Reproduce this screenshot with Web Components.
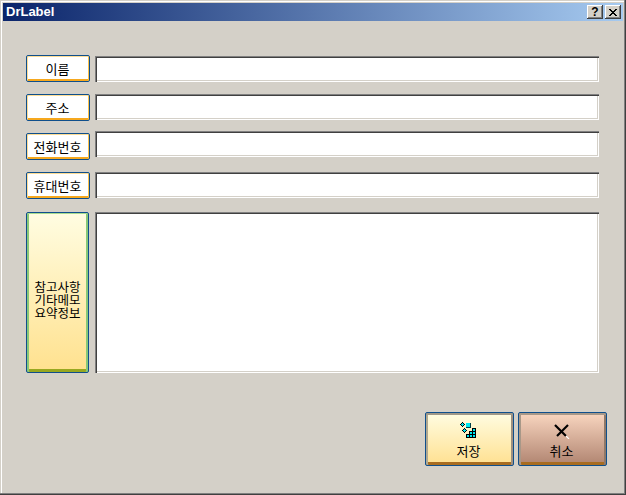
<!DOCTYPE html>
<html lang="ko">
<head>
<meta charset="utf-8">
<title>DrLabel</title>
<style>
  html, body { margin: 0; padding: 0; background: #d4d0c8; }
  body { font: 13px "Noto Sans CJK KR", "Liberation Sans", sans-serif; color: #000; }
  .r2 { margin-top: 12px; }
  .r3 { margin-top: 10px; }
  .r4 { margin-top: 12px; }
  .r5 { margin-top: 13px; }
  .r3 dr-label { height: 27px; align-self: end; }
  svg { display: block; }
</style>
</head>
<body>
<dr-window caption="DrLabel">
  <dr-form>
    <dr-row height="27"><dr-label slot="label">이름</dr-label></dr-row>
    <dr-row class="r2" height="27" box="top"><dr-label slot="label">주소</dr-label></dr-row>
    <dr-row class="r3" height="29" box="top"><dr-label slot="label">전화번호</dr-label></dr-row>
    <dr-row class="r4" height="27" box="top"><dr-label slot="label">휴대번호</dr-label></dr-row>
    <dr-row class="r5" height="161" multiline><dr-label slot="label" big>참고사항<br>기타메모<br>요약정보</dr-label></dr-row>
  </dr-form>
  <dr-actions>
    <dr-action kind="save">
      <svg slot="icon" width="17" height="17" viewBox="0 0 17 17" shape-rendering="crispEdges">
        <g id="dia" transform="translate(0 0)">
          <path fill="#000" d="M2 0h1v1h-1zM1 1h1v1h-1zM3 1h1v1h-1zM0 2h1v1h-1zM4 2h1v1h-1zM1 3h1v1h-1zM3 3h1v1h-1zM2 4h1v1h-1z"/>
          <path fill="#00e8f0" d="M2 1h1v1h1v1h-1v1h-1v-1h-1v-1h1z"/>
        </g>
        <use href="#dia" x="2" y="6"/>
        <path fill="#004048" d="M6 1h5v5H6z"/>
        <path fill="#00e8f0" d="M6 1h4v4H6z"/>
        <path fill="#000" d="M6 12h3V9h3V6h4v10H6z"/>
        <path fill="#00e8f0" d="M7 13h2v2H7zM10 13h2v2h-2zM13 13h2v2h-2zM10 10h2v2h-2zM13 10h2v2h-2zM13 7h2v2h-2z"/>
      </svg>
      저장
    </dr-action>
    <dr-action kind="cancel">
      <svg slot="icon" width="17" height="17" viewBox="0 0 17 17">
        <path stroke="#000" stroke-width="2.2" d="M2 3L13 14"/>
        <path stroke="#000" stroke-width="2.2" d="M15 3L4 14"/>
        <path stroke="#fff" stroke-width="1.1" d="M13 14L16 17"/>
      </svg>
      취소
    </dr-action>
  </dr-actions>
</dr-window>

<script>
class DrCaptionButton extends HTMLElement {
  connectedCallback() {
    this.attachShadow({ mode: 'open' }).innerHTML = `
      <style>
        :host {
          display: flex;
          align-items: center;
          justify-content: center;
          box-sizing: border-box;
          width: 16px;
          height: 14px;
          background: #d4d0c8;
          box-shadow: inset -1px -1px 0 #404040, inset 1px 1px 0 #fff, inset -2px -2px 0 #808080;
          font: bold 12px/14px "Liberation Sans", sans-serif;
          color: #000;
        }
      </style>
      <slot></slot>
    `;
  }
}

class DrWindow extends HTMLElement {
  connectedCallback() {
    const caption = this.getAttribute('caption') || '';
    this.attachShadow({ mode: 'open' }).innerHTML = `
      <style>
        :host {
          display: block;
          box-sizing: border-box;
          width: 626px;
          height: 495px;
          padding: 3px;
          background: #d4d0c8;
          box-shadow: inset -1px -1px 0 #404040, inset -2px -2px 0 #808080, inset 1px 1px 0 #d4d0c8, inset 2px 2px 0 #fff;
        }
        .title {
          display: flex;
          align-items: center;
          height: 18px;
          padding: 0 2px 0 3px;
          background: linear-gradient(90deg, #0a246a, #a6caf0);
          color: #fff;
          font: bold 13px/18px "Liberation Sans", sans-serif;
        }
        .title span { flex: 1; }
        .btns { display: flex; gap: 2px; }
        svg { display: block; }
      </style>
      <div class="title">
        <span>${caption}</span>
        <div class="btns">
          <dr-caption-button>?</dr-caption-button>
          <dr-caption-button>
            <svg width="8" height="7" viewBox="0 0 8 7" shape-rendering="crispEdges">
              <path d="M0 0h2v1h1v1h2V1h1V0h2v1H7v1H6v1H5v1h1v1h1v1h1v1H6V6H5V5H3v1H2v1H0V6h1V5h1V4h1V3H2V2H1V1H0z"/>
            </svg>
          </dr-caption-button>
        </div>
      </div>
      <slot></slot>
    `;
  }
}

class DrForm extends HTMLElement {
  connectedCallback() {
    this.attachShadow({ mode: 'open' }).innerHTML = `
      <style>
        :host {
          display: flex;
          flex-direction: column;
          padding: 34px 24px 0 23px;
        }
      </style>
      <slot></slot>
    `;
  }
}

class DrRow extends HTMLElement {
  connectedCallback() {
    const multi = this.hasAttribute('multiline');
    const field = multi ? '<textarea></textarea>' : '<input type="text">';
    const h = this.getAttribute('height');
    const top = this.getAttribute('box') === 'top';
    this.attachShadow({ mode: 'open' }).innerHTML = `
      <style>
        :host {
          display: grid;
          grid-template-columns: 69px 1fr;
          height: ${h}px;
        }
        .box {
          box-sizing: border-box;
          height: ${multi ? h : 26}px;
          align-self: ${multi || top ? 'start' : 'end'};
          background: #fff;
          box-shadow: inset 1px 1px 0 #808080, inset 2px 2px 0 #404040, inset -1px -1px 0 #fff, inset -2px -2px 0 #d4d0c8;
          padding: 2px;
        }
        input, textarea {
          display: block;
          box-sizing: border-box;
          width: 100%;
          height: 100%;
          margin: 0;
          padding: 0 2px;
          border: 0;
          outline: 0;
          background: transparent;
          resize: none;
          font: 12px "Noto Sans CJK KR", sans-serif;
        }
      </style>
      <slot name="label"></slot>
      <div class="box">${field}</div>
    `;
  }
}

class DrLabel extends HTMLElement {
  connectedCallback() {
    this.attachShadow({ mode: 'open' }).innerHTML = `
      <style>
        :host {
          display: flex;
          align-items: center;
          justify-content: center;
          box-sizing: border-box;
          width: 64px;
          height: 100%;
          border: 1px solid #0f4f8c;
          border-radius: 2px;
          padding: 1px 1px 2px 0;
          background: #fff;
          box-shadow: inset 1px 1px 0 #fddc94, inset -1px 0 0 #fbc24c, inset 0 -2px 0 #f6a81e;
          font: 13px/13px "Noto Sans CJK KR", sans-serif;
          text-align: center;
          color: #000;
        }
        :host([big]) {
          width: 63px;
          background: linear-gradient(180deg, #fffde2, #ffe18e);
          box-shadow: inset 0 1px 0 #a8dc90, inset 2px 0 0 #88c878, inset -2px 0 0 #88c878, inset 0 -3px 0 #98a820;
          padding: 15px 0 2px;
          font-size: 12.5px;
        }
      </style>
      <div><slot></slot></div>
    `;
  }
}

class DrActions extends HTMLElement {
  connectedCallback() {
    this.attachShadow({ mode: 'open' }).innerHTML = `
      <style>
        :host {
          display: flex;
          justify-content: flex-end;
          gap: 4px;
          padding: 39px 16px 0 0;
        }
      </style>
      <slot></slot>
    `;
  }
}

class DrAction extends HTMLElement {
  connectedCallback() {
    this.attachShadow({ mode: 'open' }).innerHTML = `
      <style>
        :host {
          display: flex;
          flex-direction: column;
          align-items: center;
          box-sizing: border-box;
          width: 89px;
          height: 54px;
          padding: 9px 2px 0 0;
          border: 1px solid #0f4f8c;
          border-radius: 2px;
          font: 13px/14px "Noto Sans CJK KR", sans-serif;
          color: #000;
        }
        :host([kind="save"]) {
          background: linear-gradient(180deg, #fffde2, #ffe090);
          box-shadow: inset 0 2px 0 #a09888, inset 2px 0 0 #b0a890, inset -2px 0 0 #a09080, inset 0 -3px 0 #a86c20;
        }
        :host([kind="cancel"]) {
          background: linear-gradient(180deg, #f9d6c0, #b08470);
          box-shadow: inset 0 2px 0 #a89888, inset 2px 0 0 #a89888, inset -2px 0 0 #907868, inset 0 -3px 0 #a86c20;
        }
        .icon { display: block; height: 17px; margin-bottom: 5px; }
      </style>
      <div class="icon"><slot name="icon"></slot></div>
      <slot></slot>
    `;
  }
}

customElements.define('dr-caption-button', DrCaptionButton);
customElements.define('dr-window', DrWindow);
customElements.define('dr-form', DrForm);
customElements.define('dr-row', DrRow);
customElements.define('dr-label', DrLabel);
customElements.define('dr-actions', DrActions);
customElements.define('dr-action', DrAction);
</script>
</body>
</html>
